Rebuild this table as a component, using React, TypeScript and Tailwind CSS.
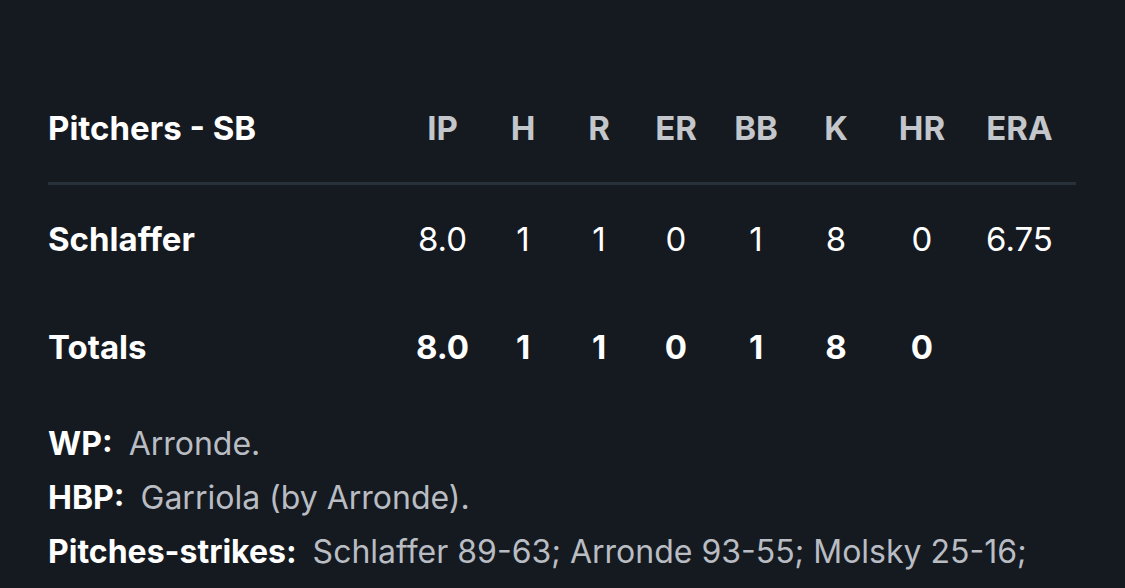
import React from "react";

const cols = ["IP", "H", "R", "ER", "BB", "K", "HR", "ERA"];
const rowA = ["8.0", "1", "1", "0", "1", "8", "0", "6.75"];
const rowT = ["8.0", "1", "1", "0", "1", "8", "0", ""];

const grid =
  "grid grid-cols-[353px_83px_78px_74px_80px_80px_80px_92px_103px] items-center";

export default function App() {
  return (
    <div
      className="w-[1125px] h-[588px] bg-[#151a20] text-white overflow-hidden pl-[48px] pr-[49px] pt-[74px]"
      style={{ fontFamily: "Inter, Lato, sans-serif" }}
    >
      <div className={`${grid} h-[111px] border-b-[3px] border-[#28303a] pt-[2px]`}>
        <div className="text-[33px] font-bold text-white">Pitchers - SB</div>
        {cols.map((c) => (
          <div key={c} className="text-center text-[33px] font-bold text-[#c3c6cb]">
            {c}
          </div>
        ))}
      </div>
      <div className={`${grid} h-[108px] pt-[2px]`}>
        <div className="text-[33px] font-bold">Schlaffer</div>
        {rowA.map((v, i) => (
          <div key={i} className="text-center text-[33px] font-normal">
            {v}
          </div>
        ))}
      </div>
      <div className={`${grid} h-[108px] pt-[2px]`}>
        <div className="text-[33px] font-bold">Totals</div>
        {rowT.map((v, i) => (
          <div key={i} className="text-center text-[33px] font-bold">
            {v}
          </div>
        ))}
      </div>
      <div className="mt-[15px] flex flex-col text-[32px]">
        {[
          ["WP:", "Arronde."],
          ["HBP:", "Garriola (by Arronde)."],
          ["Pitches-strikes:", "Schlaffer 89-63; Arronde 93-55; Molsky 25-16;"],
        ].map(([k, v]) => (
          <div key={k} className="h-[54px] pt-[2px] flex items-center whitespace-nowrap">
            <span className="font-bold text-white">{k}</span>
            <span className="ml-[16px] text-[#b9bdc3]">{v}</span>
          </div>
        ))}
      </div>
    </div>
  );
}
